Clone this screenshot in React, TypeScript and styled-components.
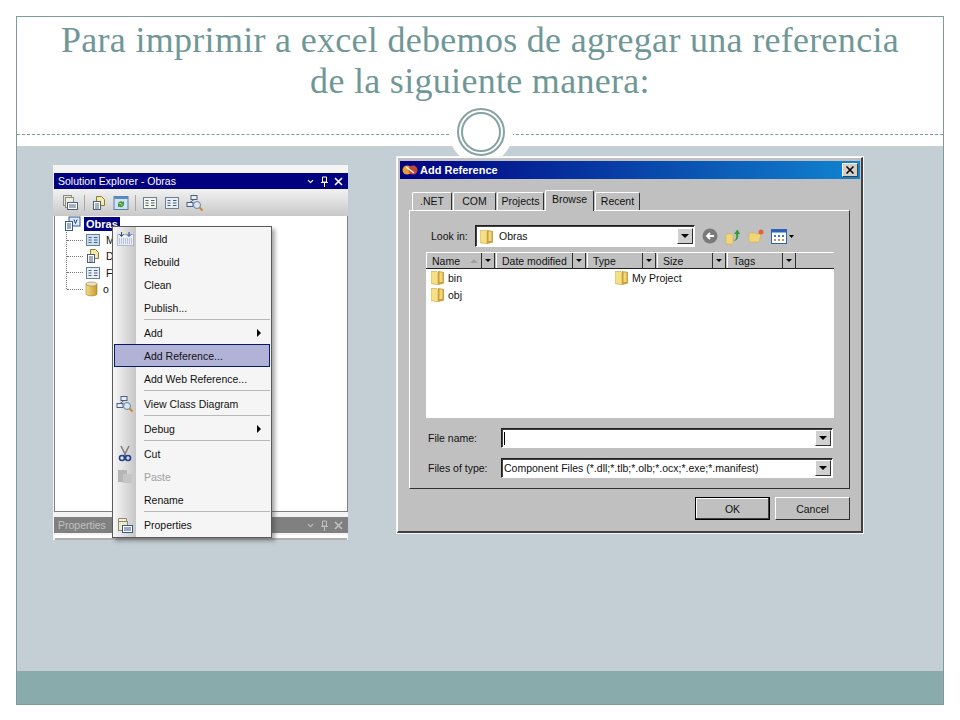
import * as React from 'react';
import styled, { createGlobalStyle } from 'styled-components';
import { ChevronDown } from 'lucide-react';

const UI_FONT = '"Liberation Sans", Arial, sans-serif';

const GlobalStyle = createGlobalStyle`
  html, body { margin: 0; padding: 0; background: #fff; }
  body { font-family: ${UI_FONT}; }
`;

const Frame = styled.div`
  position: relative;
  box-sizing: border-box;
  width: 928px;
  height: 689px;
  margin: 16px;
  border: 1px solid #7f9a9a;
  display: flex;
  flex-direction: column;
  background: #fff;
`;

const Header = styled.header`
  position: relative;
  box-sizing: border-box;
  height: 118px;
  border-bottom: 1px dashed #7f9a9a;
  margin-bottom: 11px;
  padding-top: 3px;
`;

const Title = styled.h1`
  margin: 0;
  font-family: "Liberation Serif", "Times New Roman", serif;
  font-weight: 400;
  font-size: 36px;
  line-height: 41px;
  color: #6f9797;
  text-align: center;
  letter-spacing: 0.3px;
`;

const Halo = styled.div`
  position: absolute;
  left: 432px;
  top: 83px;
  width: 64px;
  height: 64px;
  border-radius: 50%;
  background: #fff;
  display: flex;
  align-items: center;
  justify-content: center;
  z-index: 1;
`;

const Ring = styled.div`
  box-sizing: border-box;
  width: 48px;
  height: 48px;
  border-radius: 50%;
  border: 2px solid #86a2a2;
  padding: 2px;
  &::after {
    content: '';
    display: block;
    box-sizing: border-box;
    width: 100%;
    height: 100%;
    border-radius: 50%;
    border: 2px solid #86a2a2;
  }
`;

const Body = styled.main`
  flex: 1;
  display: flex;
  align-items: flex-start;
  gap: 49px;
  padding-left: 36px;
  background: #c3cfd4;
`;

const Footer = styled.footer`
  height: 33px;
  background: #8aabab;
`;

/* left screenshot */
const Explorer = styled.section`
  position: relative;
  z-index: 2;
  width: 295px;
  margin-top: 19px;
  background: #f4f4f4;
  padding-top: 8px;
  font-size: 10.5px;
  color: #111;
`;

const PaneBar = styled.div<{ $inactive?: boolean }>`
  height: 16px;
  margin-left: 1px;
  padding: 0 5px 0 4px;
  display: flex;
  align-items: center;
  justify-content: space-between;
  background: ${p => (p.$inactive ? '#808080' : '#000080')};
  color: ${p => (p.$inactive ? '#c0c0c0' : '#fff')};
`;

const PaneButtons = styled.div`
  display: flex;
  gap: 5px;
  align-items: center;
`;

const Toolbar = styled.div`
  height: 27px;
  display: flex;
  align-items: center;
  gap: 6px;
  padding-left: 9px;
  background: linear-gradient(#f2f2f2, #c8c8c8);
`;

const ToolSep = styled.span`
  width: 1px;
  height: 16px;
  background: #a8a8a8;
`;

const Tree = styled.div`
  position: relative;
  box-sizing: border-box;
  height: 296px;
  margin-left: 1px;
  background: #fff;
  border: 1px solid #808080;
  border-top: 0;
  padding: 0 0 0 10px;
  margin-bottom: 5px;
`;

const TreeRoot = styled.div`
  display: flex;
  align-items: center;
  gap: 3px;
  height: 16px;
`;

const Selected = styled.span`
  background: #000080;
  color: #fff;
  font-weight: 700;
  padding: 0 2px;
  line-height: 14px;
  font-size: 11px;
`;

const TreeChildren = styled.div`
  margin-left: 1px;
  padding-left: 18px;
  border-left: 1px dotted #777;
  height: 57px;
`;

const TreeRow = styled.div`
  position: relative;
  display: flex;
  align-items: center;
  gap: 5px;
  height: 16.3px;
  &::before {
    content: '';
    position: absolute;
    left: -18px;
    width: 16px;
    border-top: 1px dotted #777;
  }
`;

const Menu = styled.div`
  position: absolute;
  left: 59px;
  top: 61px;
  z-index: 3;
  box-sizing: border-box;
  width: 160px;
  padding: 0 1px 1px;
  background: linear-gradient(90deg, #f5f5f5, #c6c6c6) 1px 0 / 22px 100% no-repeat, #f5f5f5;
  border: 1px solid #5a5a5a;
  box-shadow: 3px 3px 4px rgba(60, 60, 60, 0.45);
  font-size: 10.5px;
`;

const MenuRow = styled.div<{ $active?: boolean; $disabled?: boolean }>`
  position: relative;
  box-sizing: border-box;
  height: 23px;
  display: flex;
  align-items: center;
  color: ${p => (p.$disabled ? '#a0a0a0' : '#111')};
  background: ${p => (p.$active ? '#b2b2d6' : 'transparent')};
  outline: ${p => (p.$active ? '1px solid #0a1a6a' : 'none')};
  outline-offset: -1px;
`;

const Gutter = styled.span`
  width: 22px;
  height: 100%;
  flex: none;
  display: flex;
  align-items: center;
  justify-content: center;
`;

const MenuLabel = styled.span`
  margin-left: 8px;
  flex: 1;
`;

const SubArrow = styled.span`
  width: 0;
  height: 0;
  margin-right: 9px;
  border-left: 4px solid #000;
  border-top: 4px solid transparent;
  border-bottom: 4px solid transparent;
`;

const MenuSep = styled.div`
  height: 2px;
  &::after {
    content: '';
    display: block;
    margin-left: 30px;
    height: 1px;
    background: #b8b8b8;
  }
`;

const BottomStrip = styled.div`
  height: 7px;
  margin: 0 1px 0 2px;
  background: #fff;
  border-top: 2px solid #f4f4f4;
  border-bottom: 2px solid #b0b0b0;
  box-sizing: border-box;
`;

/* right screenshot */
const Dialog = styled.section`
  position: relative;
  z-index: 2;
  box-sizing: border-box;
  width: 466px;
  height: 376px;
  margin-top: 11px;
  padding: 3px 1px 0 2px;
  background: #c0c0c0;
  border: 1px solid #fff;
  border-right: 2px solid #404040;
  border-bottom: 2px solid #404040;
  box-shadow: 0 0 0 1px #f4f6f7;
  font-size: 10.5px;
  color: #111;
`;

const DialogTitle = styled.div`
  height: 18px;
  display: flex;
  align-items: center;
  gap: 2px;
  padding: 0 2px;
  background: linear-gradient(90deg, #000080, #1084d0);
  color: #fff;
  font-weight: 700;
  font-size: 11px;
`;

const CloseBtn = styled.span`
  margin-left: auto;
  width: 16px;
  height: 14px;
  background: #d4d0c8;
  border: 1px solid;
  border-color: #fff #404040 #404040 #fff;
  box-sizing: border-box;
  display: flex;
  align-items: center;
  justify-content: center;
`;

const Tabs = styled.div`
  display: flex;
  align-items: flex-end;
  height: 31px;
  padding-left: 12px;
  gap: 1px;
`;

const Tab = styled.div<{ $active?: boolean; $w: number }>`
  box-sizing: border-box;
  width: ${p => p.$w}px;
  height: ${p => (p.$active ? 21 : 18)}px;
  padding-top: 2px;
  margin-bottom: ${p => (p.$active ? -1 : 0)}px;
  text-align: center;
  position: relative;
  z-index: ${p => (p.$active ? 1 : 0)};
  background: #c0c0c0;
  border: 1px solid #fff;
  border-bottom: 0;
  border-right: 1px solid #303030;
  border-radius: 2px 2px 0 0;
`;

const Panel = styled.div`
  box-sizing: border-box;
  margin: 0 9px;
  width: 441px;
  height: 279px;
  padding: 14px 16px 0 16px;
  border: 1px solid #fff;
  border-right: 1px solid #303030;
  border-bottom: 1px solid #303030;
`;

const LookRow = styled.div`
  display: flex;
  align-items: center;
  height: 22px;
`;

const FieldLabel = styled.label<{ $w: number; $inset: number }>`
  width: ${p => p.$w}px;
  flex: none;
  padding-left: ${p => p.$inset}px;
  box-sizing: border-box;
`;

const Combo = styled.div<{ $w: number; $h: number }>`
  box-sizing: border-box;
  width: ${p => p.$w}px;
  height: ${p => p.$h}px;
  display: flex;
  align-items: center;
  gap: 5px;
  padding: 0 1px 0 2px;
  background: #fff;
  border: 1px solid #fff;
  border-top-color: #202020;
  border-left-color: #202020;
  box-shadow: inset 1px 1px 0 #404040;
`;

const ComboFolder = styled.span`
  display: flex;
  margin: 0 1px 0 2px;
`;

const DropBtn = styled.span`
  margin-left: auto;
  box-sizing: border-box;
  width: 16px;
  height: 16px;
  flex: none;
  background: #d0d0d0;
  border: 1px solid;
  border-color: #fff #303030 #303030 #fff;
  display: flex;
  align-items: center;
  justify-content: center;
  &::after {
    content: '';
    border-left: 4px solid transparent;
    border-right: 4px solid transparent;
    border-top: 4px solid #000;
  }
`;

const NavIcons = styled.div`
  display: flex;
  align-items: center;
  gap: 7px;
  margin-left: 7px;
`;

const ListHead = styled.div`
  display: flex;
  height: 15px;
  margin-top: 5px;
  width: 408px;
  border-top: 1px solid #fff;
  border-bottom: 1px solid #202020;
  box-sizing: content-box;
`;

const HeadCell = styled.div<{ $w: number }>`
  box-sizing: border-box;
  width: ${p => p.$w}px;
  flex: none;
  display: flex;
  align-items: center;
  gap: 10px;
  padding-left: 5px;
  border-left: 1px solid #fff;
  border-right: 1px solid #303030;
`;

const HeadDrop = styled.div`
  box-sizing: border-box;
  width: 13px;
  flex: none;
  margin-right: 1px;
  border-right: 1px solid #303030;
  display: flex;
  align-items: center;
  justify-content: center;
  &::after {
    content: '';
    border-left: 3px solid transparent;
    border-right: 3px solid transparent;
    border-top: 3px solid #000;
  }
`;

const SortMark = styled.span`
  border-left: 4px solid transparent;
  border-right: 4px solid transparent;
  border-bottom: 4px solid #a0a0a0;
`;

const FileList = styled.div`
  box-sizing: border-box;
  width: 408px;
  height: 149px;
  padding-left: 5px;
  background: #fff;
  display: grid;
  grid-auto-flow: column;
  grid-template-rows: repeat(2, 17px);
  grid-auto-columns: 184px;
  align-content: start;
  justify-content: start;
`;

const FileItem = styled.div`
  display: flex;
  align-items: center;
  gap: 4px;
`;

const FormRow = styled.div`
  display: flex;
  align-items: center;
  margin-top: 10px;
`;

const Caret = styled.span`
  width: 1px;
  height: 13px;
  background: #000;
`;

const Buttons = styled.div`
  display: flex;
  justify-content: flex-end;
  gap: 5px;
  margin: 8px 10px 0 0;
`;

const Button = styled.button<{ $primary?: boolean }>`
  box-sizing: border-box;
  width: 75px;
  height: 23px;
  padding: 0;
  font: inherit;
  color: #111;
  background: #c0c0c0;
  border: 1px solid;
  border-color: ${p => (p.$primary ? '#000' : '#fff #303030 #303030 #fff')};
  box-shadow: ${p => (p.$primary ? 'inset -1px -1px 0 #404040, inset 1px 1px 0 #fff' : 'none')};
`;

/* drawn icons */
const Folder = () => (
  <svg width="13" height="15" viewBox="0 0 13 15">
    <path d="M0 1.500h6l1 1V15L0 13.500z" fill="#f7df85" stroke="#b8963c" strokeWidth=".5" />
    <path d="M7 1l6 1v11.500L7 15z" fill="#c9a23f" />
    <path d="M8.500 2.500h3V12h-3z" fill="#f0d67c" />
  </svg>
);

const StackIcon = () => (
  <svg width="16" height="17" viewBox="0 0 16 17">
    <rect x="1.500" y="1.500" width="8" height="10" fill="#e4e4d8" stroke="#8b8b80" />
    <rect x="3.500" y="3.500" width="8" height="10" fill="#eeeee4" stroke="#8b8b80" />
    <rect x="5.500" y="8.500" width="10" height="7" fill="#fff" stroke="#49607a" />
    <path d="M7 11h7M7 13h7" stroke="#49607a" />
  </svg>
);

const SheetIcon = ({ tone = '#e8eef5' }: { tone?: string }) => (
  <svg width="16" height="16" viewBox="0 0 16 16">
    <rect x="1.500" y="2.500" width="13" height="11" fill={tone} stroke="#6b7f95" />
    <path d="M3.500 5.500h3M3.500 8h3M3.500 10.500h3M9 5.500h3.500M9 8h3.500M9 10.500h3.500" stroke="#49607a" />
  </svg>
);

const DiagramIcon = () => (
  <svg width="18" height="18" viewBox="0 0 18 18">
    <rect x="5" y="1.500" width="6" height="4" fill="#e7edf5" stroke="#4a5f80" />
    <rect x="1" y="8.500" width="6" height="4" fill="#e7edf5" stroke="#4a5f80" />
    <path d="M8 5.500L4 8.500" stroke="#4a5f80" />
    <circle cx="11" cy="11" r="3.500" fill="#d6e6f5" stroke="#6b7f95" />
    <path d="M13.500 13.500l3 3" stroke="#c98a2a" strokeWidth="2" />
  </svg>
);

const DocIcon = () => (
  <svg width="16" height="16" viewBox="0 0 16 16">
    <path d="M5.500 1.500h5l3 3v6h-8z" fill="#f5e9a8" stroke="#8b7a3a" />
    <rect x="2.500" y="6.500" width="7" height="8" fill="#fff" stroke="#4a5f80" />
    <path d="M4 9h4M4 11h4M4 13h4" stroke="#4a5f80" />
  </svg>
);

const RefreshIcon = () => (
  <svg width="16" height="16" viewBox="0 0 16 16">
    <rect x="1" y="1.500" width="14" height="13" fill="#cfe2f3" stroke="#5b7ea5" />
    <rect x="1" y="1.500" width="14" height="2.500" fill="#5b8ac0" />
    <path d="M5 9a3 3 0 0 1 5-2l1-1v3.500H7.500l1-1a1.700 1.700 0 0 0-2.500 1zM11 9.500a3 3 0 0 1-5 2l-1 1V9h3.500l-1 1a1.700 1.700 0 0 0 2.500-.5z" fill="#3f9a2f" />
  </svg>
);

const CylinderIcon = () => (
  <svg width="13" height="16" viewBox="0 0 13 16">
    <defs>
      <linearGradient id="cyl" x1="0" x2="1">
        <stop offset="0" stopColor="#f5da80" />
        <stop offset="1" stopColor="#c99a2e" />
      </linearGradient>
    </defs>
    <path d="M1 3v10c0 2.500 11 2.500 11 0V3z" fill="url(#cyl)" stroke="#a08030" strokeWidth=".6" />
    <ellipse cx="6.500" cy="3" rx="5.500" ry="2" fill="#e8e2c8" stroke="#a08030" strokeWidth=".6" />
  </svg>
);

const ProjectIcon = () => (
  <svg width="16" height="16" viewBox="0 0 16 16">
    <rect x="4" y="1" width="11" height="9" fill="#dfe9f5" stroke="#33598f" />
    <rect x=".5" y="5.500" width="7" height="9" fill="#fff" stroke="#33598f" />
    <path d="M2 8h4M2 10h4M2 12h4" stroke="#33598f" />
    <path d="M9 3.500l1.500 4 1.500-4" stroke="#1c4587" fill="none" />
  </svg>
);

const BuildIcon = () => (
  <svg width="17" height="15" viewBox="0 0 17 15">
    <rect x=".5" y="3.500" width="16" height="11" fill="#e8edf5" stroke="#7a8aa5" strokeDasharray="1 1" />
    <path d="M4.500 1v4M2.500 3.500l2 2 2-2M12 1v4M10 3.500l2 2 2-2" stroke="#2a4a8a" fill="none" />
    <path d="M2 8h13M2 10h13M2 12h13" stroke="#8a9ab5" strokeDasharray="1 1" />
  </svg>
);

const ScissorsIcon = () => (
  <svg width="14" height="17" viewBox="0 0 14 17">
    <path d="M3 1l5 10M11 1L6 11" stroke="#7a7a7a" strokeWidth="1.500" />
    <circle cx="4" cy="13" r="2.500" fill="none" stroke="#1f3f8f" strokeWidth="1.600" />
    <circle cx="10" cy="13" r="2.500" fill="none" stroke="#1f3f8f" strokeWidth="1.600" />
  </svg>
);

const PasteIcon = () => (
  <svg width="16" height="15" viewBox="0 0 16 15">
    <rect x="1" y="1" width="9" height="12" fill="#b5b5b5" />
    <rect x="6" y="5" width="9" height="9" fill="#c5c5c5" />
  </svg>
);

const PropsIcon = () => (
  <svg width="16" height="16" viewBox="0 0 16 16">
    <path d="M1.500 1.500h8v3h-8z" fill="#f5eecb" stroke="#8b8b70" />
    <rect x="1.500" y="4.500" width="9" height="9" fill="#efe9d0" stroke="#8b8b70" />
    <rect x="5.500" y="8.500" width="10" height="7" fill="#fff" stroke="#33598f" />
    <path d="M7 11h7M7 13h7" stroke="#33598f" />
  </svg>
);

const PaneControls = ({ color }: { color: string }) => (
  <PaneButtons>
    <ChevronDown size={9} color={color} strokeWidth={3} />
    <svg width="9" height="11" viewBox="0 0 9 11">
      <path d="M2.500 1h4v5h-4zM1 6.500h7M4.500 7v4" stroke={color} fill="none" />
    </svg>
    <svg width="9" height="9" viewBox="0 0 9 9">
      <path d="M1 1l7 7M8 1L1 8" stroke={color} strokeWidth="1.600" />
    </svg>
  </PaneButtons>
);

type MenuEntry =
  | { sep: true }
  | { label: string; icon?: React.ReactNode; arrow?: boolean; active?: boolean; disabled?: boolean };

const menuEntries: MenuEntry[] = [
  { label: 'Build', icon: <BuildIcon /> },
  { label: 'Rebuild' },
  { label: 'Clean' },
  { label: 'Publish...' },
  { sep: true },
  { label: 'Add', arrow: true },
  { label: 'Add Reference...', active: true },
  { label: 'Add Web Reference...' },
  { sep: true },
  { label: 'View Class Diagram', icon: <DiagramIcon /> },
  { sep: true },
  { label: 'Debug', arrow: true },
  { sep: true },
  { label: 'Cut', icon: <ScissorsIcon /> },
  { label: 'Paste', icon: <PasteIcon />, disabled: true },
  { label: 'Rename' },
  { sep: true },
  { label: 'Properties', icon: <PropsIcon /> },
];

const treeRows = [
  { key: 'M', icon: <SheetIcon tone="#cfe0f2" /> },
  { key: 'D', icon: <DocIcon /> },
  { key: 'F', icon: <SheetIcon /> },
  { key: 'o', icon: <CylinderIcon /> },
];

const columns = [
  { name: 'Name', w: 56, sort: true },
  { name: 'Date modified', w: 77 },
  { name: 'Type', w: 56 },
  { name: 'Size', w: 56 },
  { name: 'Tags', w: 56 },
];

const tabs = [
  { name: '.NET', w: 40 },
  { name: 'COM', w: 43 },
  { name: 'Projects', w: 47 },
  { name: 'Browse', w: 49, active: true },
  { name: 'Recent', w: 45 },
];

const SolutionExplorer = () => (
  <Explorer>
    <PaneBar>
      Solution Explorer - Obras
      <PaneControls color="#fff" />
    </PaneBar>
    <Toolbar>
      <StackIcon />
      <ToolSep />
      <DocIcon />
      <RefreshIcon />
      <ToolSep />
      <SheetIcon tone="#f5f5ea" />
      <SheetIcon />
      <DiagramIcon />
    </Toolbar>
    <Tree>
      <TreeRoot>
        <ProjectIcon />
        <Selected>Obras</Selected>
      </TreeRoot>
      <TreeChildren>
        {treeRows.map(row => (
          <TreeRow key={row.key}>
            {row.icon}
            {row.key}
          </TreeRow>
        ))}
      </TreeChildren>
    </Tree>
    <PaneBar $inactive>
      Properties
      <PaneControls color="#c0c0c0" />
    </PaneBar>
    <BottomStrip />
    <Menu>
      {menuEntries.map((entry, i) =>
        'sep' in entry ? (
          <MenuSep key={i} />
        ) : (
          <MenuRow key={entry.label} $active={entry.active} $disabled={entry.disabled}>
            <Gutter>{entry.icon}</Gutter>
            <MenuLabel>{entry.label}</MenuLabel>
            {entry.arrow && <SubArrow />}
          </MenuRow>
        ),
      )}
    </Menu>
  </Explorer>
);

const AddReference = () => (
  <Dialog>
    <DialogTitle>
      <svg width="16" height="12" viewBox="0 0 16 12">
        <circle cx="5" cy="6" r="4.500" fill="#e8a030" />
        <circle cx="11" cy="6" r="4.500" fill="#c04a3a" />
        <path d="M4 3l8 6" stroke="#f5f5f5" strokeWidth="1.500" />
      </svg>
      Add Reference
      <CloseBtn>
        <svg width="8" height="8" viewBox="0 0 8 8">
          <path d="M.5.5l7 7M7.500.5l-7 7" stroke="#000" strokeWidth="1.500" />
        </svg>
      </CloseBtn>
    </DialogTitle>
    <Tabs>
      {tabs.map(tab => (
        <Tab key={tab.name} $w={tab.w} $active={tab.active}>
          {tab.name}
        </Tab>
      ))}
    </Tabs>
    <Panel>
      <LookRow>
        <FieldLabel $w={49} $inset={5}>Look in:</FieldLabel>
        <Combo $w={220} $h={22}>
          <ComboFolder>
            <Folder />
          </ComboFolder>
          Obras
          <DropBtn />
        </Combo>
        <NavIcons>
          <svg width="16" height="16" viewBox="0 0 16 16">
            <circle cx="8" cy="8" r="7.500" fill="#7a7a7a" />
            <path d="M12 8H5M8 5L5 8l3 3" stroke="#fff" strokeWidth="1.800" fill="none" />
          </svg>
          <svg width="16" height="17" viewBox="0 0 16 17">
            <path d="M1 6h6l1 1v9H1z" fill="#f2d675" stroke="#c9a84a" strokeWidth=".5" />
            <path d="M8 13c3-1 4-4 3-7H9l3.500-4.500L15 6h-2c1 4-1 7-5 7z" fill="#2f9a3a" />
          </svg>
          <svg width="16" height="14" viewBox="0 0 16 14">
            <path d="M1 4h6l1 1h5l-2 8H1z" fill="#f2d675" stroke="#c9a84a" strokeWidth=".5" />
            <circle cx="13" cy="3" r="2.500" fill="#e0603a" />
          </svg>
          <svg width="24" height="15" viewBox="0 0 24 15">
            <rect x=".5" y=".5" width="15" height="14" fill="#fff" stroke="#2a62b8" />
            <rect x=".5" y=".5" width="15" height="3" fill="#2a62b8" />
            <path d="M3 6h2v2H3zM7 6h2v2H7zM11 6h2v2h-2z" fill="#3a7ad0" />
            <path d="M3 10h2v2H3zM7 10h2v2H7zM11 10h2v2h-2z" fill="#d08a3a" />
            <path d="M18 6h5l-2.500 3z" fill="#000" />
          </svg>
        </NavIcons>
      </LookRow>
      <ListHead>
        {columns.map(col => (
          <React.Fragment key={col.name}>
            <HeadCell $w={col.w}>
              {col.name}
              {col.sort && <SortMark />}
            </HeadCell>
            <HeadDrop />
          </React.Fragment>
        ))}
      </ListHead>
      <FileList>
        {['bin', 'obj', 'My Project'].map(name => (
          <FileItem key={name}>
            <Folder />
            {name}
          </FileItem>
        ))}
      </FileList>
      <FormRow>
        <FieldLabel $w={75} $inset={2}>File name:</FieldLabel>
        <Combo $w={333} $h={20}>
          <Caret />
          <DropBtn />
        </Combo>
      </FormRow>
      <FormRow>
        <FieldLabel $w={75} $inset={2}>Files of type:</FieldLabel>
        <Combo $w={333} $h={20}>
          Component Files (*.dll;*.tlb;*.olb;*.ocx;*.exe;*.manifest)
          <DropBtn />
        </Combo>
      </FormRow>
    </Panel>
    <Buttons>
      <Button $primary>OK</Button>
      <Button>Cancel</Button>
    </Buttons>
  </Dialog>
);

export default function App() {
  return (
    <>
      <GlobalStyle />
      <Frame>
        <Header>
          <Title>
            Para imprimir a excel debemos de agregar una referencia
            <br />
            de la siguiente manera:
          </Title>
          <Halo>
            <Ring />
          </Halo>
        </Header>
        <Body>
          <SolutionExplorer />
          <AddReference />
        </Body>
        <Footer />
      </Frame>
    </>
  );
}
